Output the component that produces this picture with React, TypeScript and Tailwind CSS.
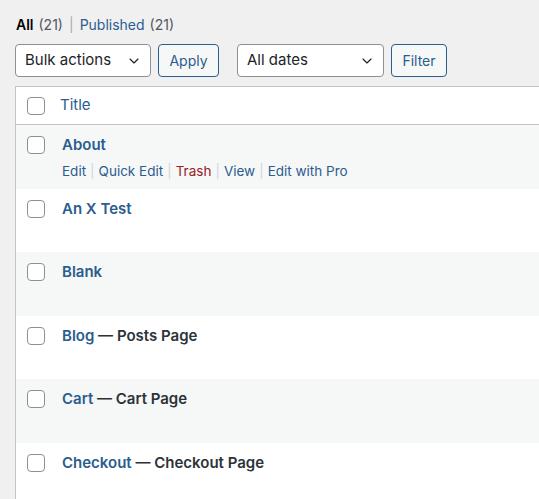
import { ChevronDown } from 'lucide-react'

type Page = { title: string; state?: string; actions?: boolean }

const pages: Page[] = [
  { title: 'About', actions: true },
  { title: 'An X Test' },
  { title: 'Blank' },
  { title: 'Blog', state: 'Posts Page' },
  { title: 'Cart', state: 'Cart Page' },
  { title: 'Checkout', state: 'Checkout Page' },
]

const Checkbox = () => (
  <span className="block w-[18px] h-[18px] rounded-[4px] border border-[#8c8f94] bg-white shrink-0" />
)

const RowActions = () => {
  const items = [
    { label: 'Edit' },
    { label: 'Quick Edit' },
    { label: 'Trash', danger: true },
    { label: 'View' },
    { label: 'Edit with Pro' },
  ]
  return (
    <div className="flex items-center text-[13.5px] mt-[4px]">
      {items.map((it, i) => (
        <span key={it.label} className="flex items-center">
          {i > 0 && <span className="mx-[4px] text-[#d4d5d8]">|</span>}
          <span className={it.danger ? 'text-[#932424]' : 'text-[#2b5d8f]'}>{it.label}</span>
        </span>
      ))}
    </div>
  )
}

export default function App() {
  return (
    <div className="w-[539px] h-[499px] overflow-hidden bg-[#f0f0f1] font-['Inter',sans-serif] text-[#1d2327]">
      <div className="pl-[16px] pt-[14px] text-[14px] flex items-center h-[34px]">
        <span className="font-semibold text-black">All</span>
        <span className="ml-[5px] text-[#50575e]">(21)</span>
        <span className="mx-[6px] text-[#a7aaad]">|</span>
        <span className="text-[#2b5d8f]">Published</span>
        <span className="ml-[5px] text-[#50575e]">(21)</span>
      </div>

      <div className="flex items-center pl-[15px] mt-[10px] h-[33px]">
        <div className="w-[136px] h-[33px] rounded-[4px] border border-[#8c8f94] bg-white flex items-center justify-between pl-[9px] pr-[8px] text-[15px] text-[#1d2327]">
          <span>Bulk actions</span>
          <ChevronDown size={16} strokeWidth={1.75} />
        </div>
        <div className="ml-[7px] w-[61px] h-[33px] rounded-[4px] border border-[#2b5d8f] bg-[#f6f7f7] flex items-center justify-center text-[14px] text-[#2b5d8f]">
          Apply
        </div>
        <div className="ml-[18px] w-[147px] h-[33px] rounded-[4px] border border-[#8c8f94] bg-white flex items-center justify-between pl-[9px] pr-[8px] text-[15px] text-[#1d2327]">
          <span>All dates</span>
          <ChevronDown size={16} strokeWidth={1.75} />
        </div>
        <div className="ml-[7px] w-[56px] h-[33px] rounded-[4px] border border-[#2b5d8f] bg-[#f6f7f7] flex items-center justify-center text-[14px] text-[#2b5d8f]">
          Filter
        </div>
      </div>

      <div className="ml-[15px] mt-[9px] border-l border-t border-[#c3c4c7] bg-white">
        <div className="h-[38px] flex items-center pl-[11px] border-b border-[#c3c4c7]">
          <Checkbox />
          <span className="ml-[15px] text-[15px] text-[#2b5d8f]">Title</span>
        </div>
        {pages.map((p, i) => (
          <div
            key={p.title}
            className={`h-[63.5px] flex items-start pl-[11px] pt-[11px] ${i % 2 === 0 ? 'bg-[#f6f7f7]' : 'bg-white'}`}
          >
            <Checkbox />
            <div className="ml-[17px] -mt-[2px]">
              <div className="text-[15px] font-semibold">
                <span className="text-[#2b5d8f]">{p.title}</span>
                {p.state && <span className="text-[#2c3338]"> — {p.state}</span>}
              </div>
              {p.actions && <RowActions />}
            </div>
          </div>
        ))}
      </div>
    </div>
  )
}
